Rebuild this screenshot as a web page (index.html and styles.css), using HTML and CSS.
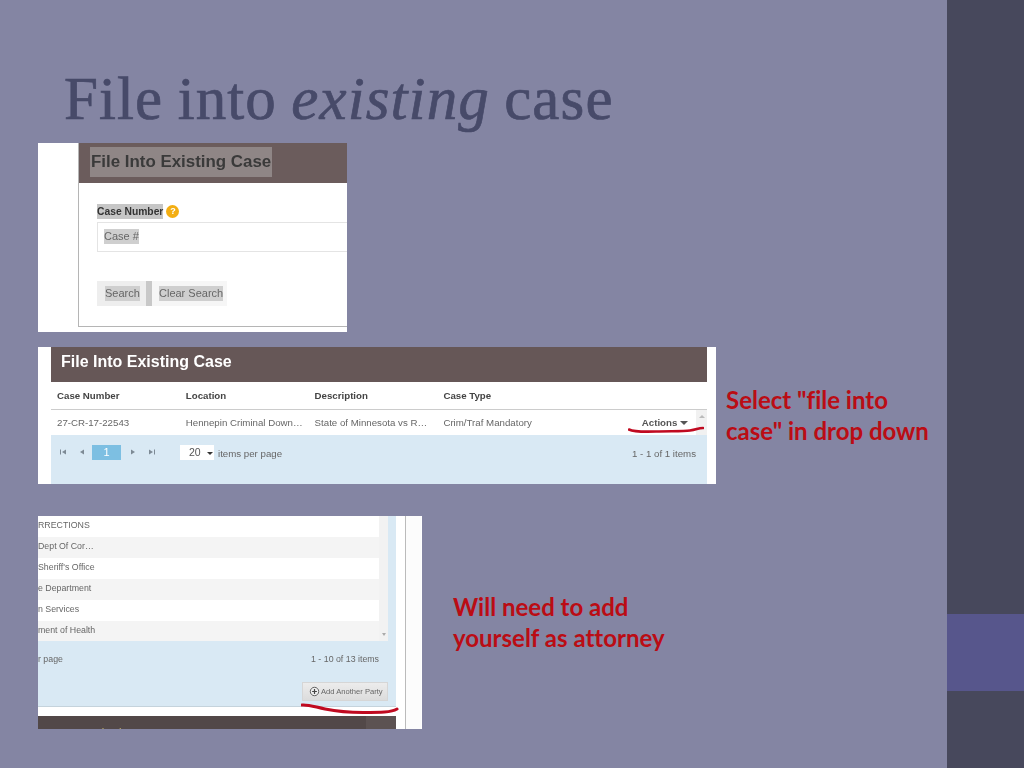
FILE: index.html
```html
<!DOCTYPE html>
<html lang="en">
<head>
<meta charset="utf-8">
<title>File into existing case</title>
<link rel="stylesheet" href="styles.css">
</head>
<body>
<div class="slide">
  <main class="main">
    <h1 class="title">File into <em>existing</em> case</h1>

    <section class="shot shot-search">
      <div class="search-card">
        <div class="search-head"><span class="search-title">File Into Existing Case</span></div>
        <div class="search-body">
          <div class="field-label"><span class="hl-label">Case Number</span><span class="help">?</span></div>
          <div class="field-input"><span class="hl-input">Case #</span></div>
          <div class="btns">
            <span class="btn btn-search"><span class="hl-btn">Search</span></span>
            <span class="btn-sep"></span>
            <span class="btn btn-clear"><span class="hl-btn">Clear Search</span></span>
          </div>
        </div>
      </div>
    </section>

    <div class="shot-row row-results">
      <section class="shot shot-results">
        <div class="res-inner">
          <div class="res-head">File Into Existing Case</div>
          <div class="res-cols">
            <span class="col">Case Number</span><span class="col">Location</span><span class="col">Description</span><span class="col">Case Type</span>
          </div>
          <div class="res-row-wrap">
            <div class="res-row">
              <span class="col">27-CR-17-22543</span><span class="col">Hennepin Criminal Down…</span><span class="col">State of Minnesota vs R…</span><span class="col">Crim/Traf Mandatory</span>
              <span class="actions">Actions <i class="caret"></i></span>
            </div>
            <div class="scroll-up"><i class="tiny-up"></i></div>
          </div>
          <div class="pager">
            <div class="pager-left">
              <svg class="pg" viewBox="0 0 8 8"><path d="M1 1.500h1v5H1zM7 1.500v5L3 4z" fill="#7d8a95"/></svg>
              <svg class="pg" viewBox="0 0 8 8"><path d="M6 1.500v5L2 4z" fill="#7d8a95"/></svg>
              <span class="page-num">1</span>
              <svg class="pg" viewBox="0 0 8 8"><path d="M2 1.500v5L6 4z" fill="#7d8a95"/></svg>
              <svg class="pg" viewBox="0 0 8 8"><path d="M1 1.500v5L5 4zM6 1.500h1v5H6z" fill="#7d8a95"/></svg>
              <span class="per-select">20 <i class="caret dark"></i></span>
              <span class="per-text">items per page</span>
            </div>
            <span class="pager-count">1 - 1 of 1 items</span>
          </div>
        </div>
        <svg class="ink ink-actions" viewBox="0 0 76 8"><path d="M1 3.500C6 6 14 6 28 5.500S55 5.500 62 4.500 70 2 75 2" fill="none" stroke="#c00a20" stroke-width="2.600" stroke-linecap="round"/></svg>
      </section>
      <p class="note">Select "file into<br>case" in drop down</p>
    </div>

    <div class="shot-row row-party">
      <section class="shot shot-party">
        <div class="party-inner">
          <div class="party-table">
            <div class="party-rows">
              <div class="p-row">RRECTIONS</div>
              <div class="p-row alt">Dept Of Cor…</div>
              <div class="p-row">Sheriff's Office</div>
              <div class="p-row alt">e Department</div>
              <div class="p-row">n Services</div>
              <div class="p-row alt">ment of Health</div>
            </div>
            <div class="party-scroll"><i class="tiny-down"></i></div>
          </div>
          <div class="party-foot">
            <div class="foot-line"><span>r page</span><span>1 - 10 of 13 items</span></div>
            <div class="foot-btn-line">
              <span class="add-btn">
                <svg class="add-icon" viewBox="0 0 12 12"><circle cx="6" cy="6" r="4.600" fill="#eee" stroke="#555" stroke-width="1"/><path d="M6 3.400v5.200M3.400 6h5.200" stroke="#444" stroke-width="1.300"/></svg>
                Add Another Party
              </span>
            </div>
          </div>
          <div class="party-gap"></div>
          <div class="party-help"><span>Need Help?</span></div>
        </div>
        <div class="party-rail"></div>
        <svg class="ink ink-party" viewBox="0 0 98 12"><path d="M1 2C8 1.500 14 4 24 6S44 9.500 62 9.500 90 9.500 96 6" fill="none" stroke="#c00a20" stroke-width="3" stroke-linecap="round"/></svg>
      </section>
      <p class="note">Will need to add<br>yourself as attorney</p>
    </div>
  </main>
  <aside class="rail">
    <div class="rail-accent"></div>
  </aside>
</div>
</body>
</html>
```

FILE: styles.css
```css
* { box-sizing: border-box; }
html, body { margin: 0; padding: 0; }
body { width: 1024px; height: 768px; overflow: hidden; font-family: "Liberation Sans", Arial, sans-serif; }

.slide { display: flex; width: 1024px; height: 768px; background: #8485a3; }
.main { width: 947px; padding-left: 38px; display: flex; flex-direction: column; }

.title {
  margin: 0; height: 143px; padding: 63px 0 0 26px;
  font-family: "Liberation Serif", serif; font-weight: 400; font-size: 61px; line-height: 72px;
  letter-spacing: 1.100px; word-spacing: -2px; -webkit-text-stroke: 0.7px #474a69;
  color: #474a69; white-space: nowrap;
}

.rail { width: 77px; background: #47485c; padding-top: 614px; }
.rail-accent { height: 77px; background: #57568c; }

.shot { position: relative; background: #fff; color: #555; flex: none; }
.shot-row { display: flex; align-items: flex-start; }
.row-results { margin-top: 15px; }
.row-party { margin-top: 32px; }
.note {
  margin: 0; font-family: Lato, sans-serif; font-weight: 700; font-size: 24px; line-height: 31px;
  color: #bb0c14; white-space: nowrap; font-variant-ligatures: none;
}
.row-results .note { margin: 37px 0 0 10px; }
.row-party .note { margin: 75px 0 0 31px; }
.ink { position: absolute; display: block; }

/* first screenshot */
.shot-search { width: 309px; height: 189px; padding: 0 0 5px 40px; filter: blur(0.4px); }
.search-card { height: 184px; border-left: 1px solid #b5b5b5; border-bottom: 1px solid #b5b5b5; }
.search-head { height: 40px; background: #6b5c5c; padding: 4px 0 0 11px; }
.search-title {
  display: inline-block; height: 30px; padding: 0 1px; background: #8f8686; color: #3a3a3a;
  font-size: 16.900px; font-weight: 700; line-height: 29px; white-space: nowrap;
}
.search-body { padding: 21px 0 0 18px; }
.field-label { display: flex; align-items: center; gap: 3px; height: 15px; }
.hl-label { background: #c6c6c6; color: #333; font-size: 10.300px; font-weight: 700; line-height: 15px; white-space: nowrap; }
.help {
  width: 13px; height: 13px; border-radius: 50%; background: #f3ae12; color: #fff;
  font-size: 9px; font-weight: 700; line-height: 13px; text-align: center;
}
.field-input { height: 30px; margin-top: 3px; padding: 3px 0 0 6px; border: 1px solid #e4e4e4; border-right: 0; }
.hl-input, .hl-btn { background: #cfcfcf; color: #666; font-size: 11px; line-height: 15px; display: inline-block; white-space: nowrap; }
.btns { display: flex; height: 25px; margin-top: 29px; }
.btn { display: flex; align-items: center; padding-bottom: 1px; }
.btn-search { width: 49px; padding-left: 8px; background: #eee; }
.btn-sep { width: 6px; background: #c8c8c8; }
.btn-clear { width: 75px; padding-left: 7px; background: #f6f6f6; }

/* second screenshot */
.shot-results { width: 678px; height: 137px; padding: 0 9px 0 13px; font-size: 9.700px; filter: blur(0.3px); }
.res-inner { height: 137px; display: flex; flex-direction: column; }
.res-head { height: 35px; background: #665757; color: #fff; font-size: 16px; font-weight: 700; line-height: 29px; padding-left: 10px; }
.res-cols { height: 28px; display: flex; padding-left: 6px; align-items: center; border-bottom: 1px solid #ccc; font-weight: 700; color: #444; }
.col { width: 128.800px; flex: none; white-space: nowrap; }
.res-row-wrap { display: flex; height: 25px; }
.res-row { flex: 1; display: flex; align-items: center; padding-left: 6px; color: #666; }
.actions { margin-left: auto; margin-right: 8px; font-weight: 700; color: #555; white-space: nowrap; }
.caret { display: inline-block; width: 0; height: 0; margin-left: 0; border: 4px solid transparent; border-top: 4px solid #555; border-bottom: 0; vertical-align: 1px; }
.caret.dark { border-top-color: #333; border-width: 3px; border-bottom: 0; margin-left: 3px; }
.scroll-up { width: 11px; background: #f1f1f1; display: flex; justify-content: center; padding-top: 5px; }
.tiny-up { width: 0; height: 0; border: 3px solid transparent; border-bottom: 3px solid #bbb; border-top: 0; }
.pager { flex: 1; background: #d9e9f4; display: flex; justify-content: space-between; align-items: flex-start; padding: 9px 11px 0 8px; color: #666; }
.pager-left { display: flex; align-items: center; }
.pg { width: 8px; height: 8px; flex: none; }
.pg + .pg { margin-left: 11px; }
.page-num { width: 29px; height: 15px; margin: 0 8px 0 6px; background: #7dbfe2; color: #fff; text-align: center; font-size: 11px; line-height: 15px; }
.per-select { width: 34px; height: 15px; margin: 1px 0 0 24px; padding-left: 9px; background: #fff; color: #555; font-size: 10.500px; line-height: 14px; white-space: nowrap; }
.per-text { margin: 3px 0 0 4px; white-space: nowrap; }
.pager-count { white-space: nowrap; margin-top: 4px; }
.ink-actions { left: 590px; top: 79px; width: 76px; height: 8px; }

/* third screenshot */
.shot-party { width: 384px; height: 213px; display: flex; font-size: 8.800px; filter: blur(0.3px); }
.party-inner { width: 358px; display: flex; flex-direction: column; }
.party-table { display: flex; height: 125px; background: #d9e9f4; padding-right: 8px; }
.party-rows { flex: 1; }
.p-row { height: 21px; line-height: 18px; background: #fff; color: #666; white-space: nowrap; }
.p-row.alt { background: #f4f4f4; }
.party-scroll { width: 9px; background: #f2f2f2; display: flex; justify-content: center; align-items: flex-end; padding-bottom: 5px; }
.tiny-down { width: 0; height: 0; border: 2.500px solid transparent; border-top: 3px solid #aaa; border-bottom: 0; }
.party-foot { height: 66px; background: #d9e9f4; border-bottom: 1px solid #c5d3dc; color: #666; }
.foot-line { display: flex; justify-content: space-between; padding: 13px 17px 0 0; line-height: 10px; }
.foot-btn-line { display: flex; justify-content: flex-end; padding: 18px 8px 0 0; }
.add-btn {
  display: flex; align-items: center; gap: 1px; width: 86px; height: 19px; padding: 0 0 1px 6px;
  background: linear-gradient(#ececec, #dcdcdc); border: 1px solid #d6d6d6; font-size: 7.600px; color: #666; white-space: nowrap;
}
.add-icon { width: 11px; height: 11px; flex: none; }
.party-gap { height: 9px; background: #fff; }
.party-help {
  height: 13px; overflow: hidden; padding: 11px 0 0 43px;
  background: linear-gradient(to right, #524848 328px, #5c5252 328px);
  color: #a89a62; font-size: 9.500px; font-weight: 700; line-height: 10px; white-space: nowrap;
}
.party-rail { width: 16px; margin-left: 9px; border-left: 1px solid #bbb; background: #fcfcfc; margin-right: 1px; }
.ink-party { left: 263px; top: 187px; width: 98px; height: 12px; }
```
